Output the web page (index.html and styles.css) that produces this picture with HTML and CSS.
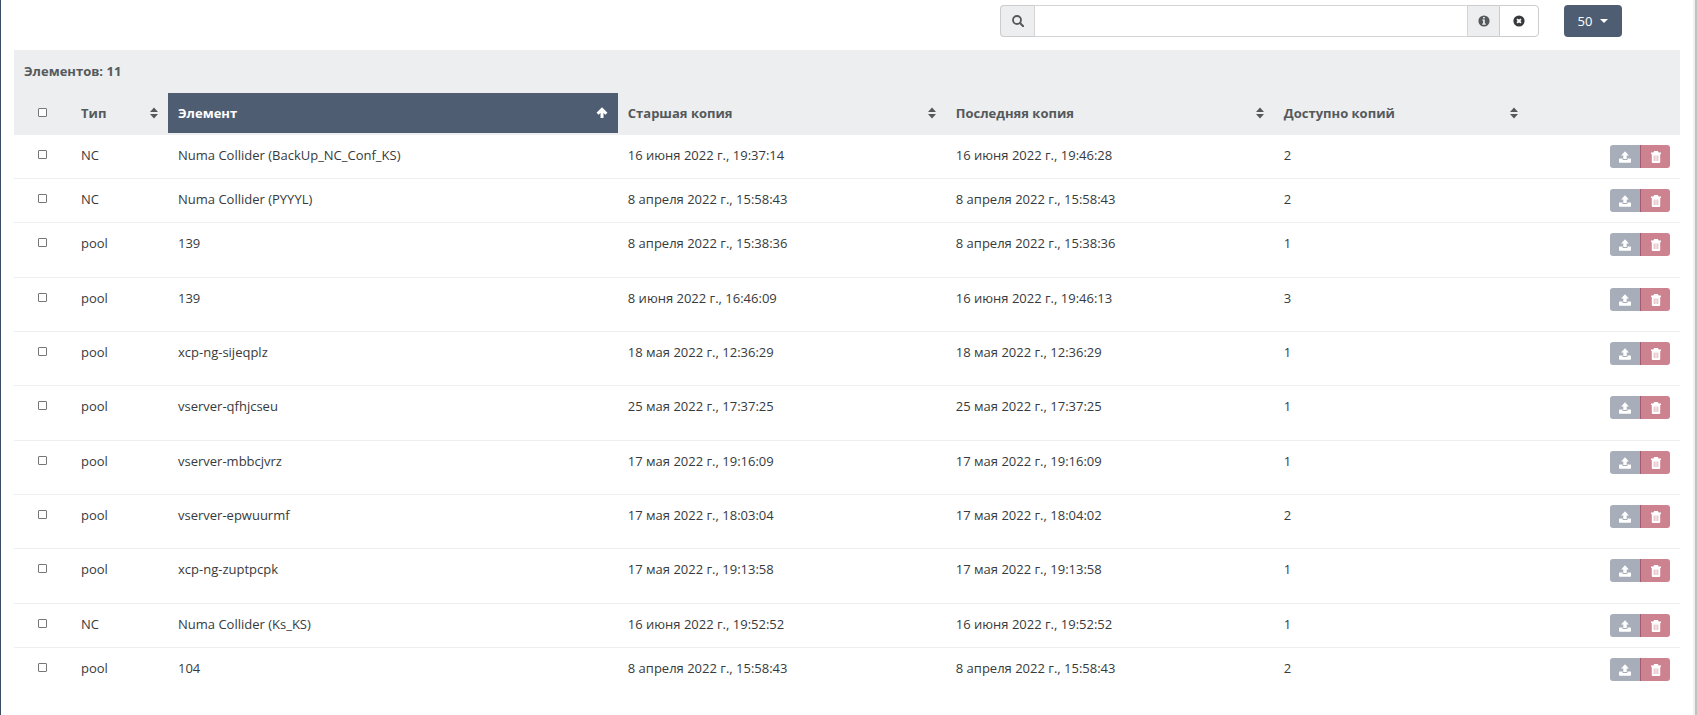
FILE: index.html
```html
<!DOCTYPE html>
<html lang="ru">
<head>
<meta charset="utf-8">
<title>Резервные копии</title>
<link rel="stylesheet" href="styles.css">
</head>
<body>
<svg class="sprite" aria-hidden="true">
  <symbol id="i-sort" viewBox="0 0 8 12"><path d="M4 0.5 8 5H0zM4 11.500 0 7h8z"/></symbol>
  <symbol id="i-up" viewBox="0 0 12 12"><path d="M1.600 6.700 6 2.300l4.400 4.400M6 3v8" fill="none" stroke="currentColor" stroke-width="3"/></symbol>
  <symbol id="i-upload" viewBox="0 0 12 12"><path d="M6 .3 9.900 4.500H7.700V8H4.300V4.500H2.100zM.6 7.600h3v1.300h4.800V7.600h3c.3 0 .6.300.6.600v2.900c0 .3-.3.600-.6.600H.6c-.3 0-.6-.3-.6-.6V8.200c0-.3.300-.6.600-.6z"/></symbol>
  <symbol id="i-trash" viewBox="0 0 12 12"><path d="M4.200 0h3.600l.9 1.500H11v1.500h-.8v7.900c0 .6-.5 1.100-1.100 1.100H2.900c-.6 0-1.100-.5-1.100-1.100V3H1V1.500h2.300z"/><path d="M4.200 4.500V10M6 4.500V10M7.800 4.500V10" stroke="#cc838f" stroke-width=".6"/></symbol>
</svg>
<main class="page">
  <div class="toolbar">
    <form class="search" onsubmit="return false">
      <label class="addon" for="q" aria-label="Поиск"><svg class="icon" viewBox="0 0 12 12"><circle cx="5" cy="5" r="4" fill="none" stroke="currentColor" stroke-width="1.800"/><path d="m8 8 3.200 3.200" stroke="currentColor" stroke-width="2" stroke-linecap="round"/></svg></label>
      <input class="search-input" id="q" type="text">
      <span class="addon addon-info"><svg class="icon" viewBox="0 0 12 12"><path fill-rule="evenodd" d="M6 .4a5.600 5.600 0 1 1 0 11.200A5.600 5.600 0 0 1 6 .4zM5.100 1.900v1.500h1.700V1.900zM4.200 4.400v1.200h.9v3h-.9v1.200h3.600V8.600h-1V4.400z"/></svg></span>
      <button class="clear" type="reset" aria-label="Очистить"><svg class="icon" viewBox="0 0 12 12"><circle cx="6" cy="6" r="5.600"/><path d="m4.100 4.100 3.800 3.800m0-3.800L4.100 7.900" stroke="#fff" stroke-width="1.900"/></svg></button>
    </form>
    <button class="limit" type="button">50<span class="caret"></span></button>
  </div>
  <table class="grid">
    <colgroup><col class="c-check"><col class="c-type"><col class="c-item"><col class="c-old"><col class="c-last"><col class="c-count"><col class="c-act"></colgroup>
    <thead>
      <tr class="summary"><th colspan="7">Элементов: 11</th></tr>
      <tr class="heads">
        <th class="check"><input type="checkbox" aria-label="Выбрать все"></th>
        <th><div class="head">Тип<svg class="sort"><use href="#i-sort"/></svg></div></th>
        <th class="sorted"><div class="head">Элемент<svg class="icon"><use href="#i-up"/></svg></div></th>
        <th><div class="head">Старшая копия<svg class="sort"><use href="#i-sort"/></svg></div></th>
        <th><div class="head">Последняя копия<svg class="sort"><use href="#i-sort"/></svg></div></th>
        <th><div class="head">Доступно копий<svg class="sort"><use href="#i-sort"/></svg></div></th>
        <th></th>
      </tr>
    </thead>
    <tbody id="rows"></tbody>
  </table>
</main>
<script src="rows.js"></script>
</body>
</html>
```

FILE: styles.css
```css
* { box-sizing: border-box; }
body {
  margin: 0;
  background: #fff;
  color: #373a3c;
  font: 13px/20px "Open Sans", "Noto Sans", sans-serif;
}
.sprite { display: none; }
.page {
  min-height: 100vh;
  padding: 5px 15px 0 13px;
  border-left: 1px solid #3d4a63;
  border-right: 2px solid #c1c1c1;
  box-shadow: inset -2px 0 #f1f1f1;
}
svg { display: block; fill: currentColor; }
.icon { width: 12px; height: 12px; }
.toolbar {
  display: flex;
  justify-content: flex-end;
  gap: 25px;
  height: 45px;
  padding-right: 58px;
}
.search { display: flex; width: 539px; height: 32px; }
.addon, .clear {
  display: flex;
  align-items: center;
  justify-content: center;
  border: 1px solid #ccc;
  color: #55595c;
}
.addon { width: 34px; background: #eceeef; border-right: 0; border-radius: 4px 0 0 4px; }
.addon-info { width: 31px; border-left: 0; border-radius: 0; }
.search-input { flex: 1; min-width: 0; padding: 0 8px; border: 1px solid #d4d4d4; font: inherit; }
.clear { width: 40px; padding: 0; background: #fff; color: #373a3c; border-radius: 0 4px 4px 0; }
.limit {
  display: flex;
  align-items: center;
  justify-content: center;
  gap: 8px;
  width: 58px;
  height: 32px;
  padding: 0;
  border: 0;
  border-radius: 4px;
  background: #4f5d73;
  color: #fff;
  font: inherit;
}
.caret { border: 4px solid transparent; border-top-color: #fff; border-bottom: 0; }
.grid { width: 100%; table-layout: fixed; border-collapse: collapse; }
.c-check { width: 57px; }
.c-type { width: 97px; }
.c-item { width: 27%; }
.c-old { width: 328px; }
.c-last { width: 328px; }
.c-count { width: 254px; }
th, td { padding: 10px; text-align: left; vertical-align: top; }
thead { background: #eceeef; color: #55595c; }
.summary th { height: 43px; padding: 11px 10px; }
.heads th { height: 40px; }
.heads { border-bottom: 2px solid #eceeef; }
.head { display: flex; align-items: center; justify-content: space-between; }
.sort { width: 8px; height: 12px; }
.sorted { background: #4f5d73; color: #fff; }
.check { padding-left: 24px; }
.check input { display: block; width: 9px; height: 9px; margin: 5px 0 0; appearance: none; border: 1px solid #767676; border-radius: 1px; background: #fff; }
.check input:checked { background: #4f5d73; }
tbody tr { height: 44px; }
tbody tr + tr { border-top: 1px solid #eceeef; }
tbody .pool { height: 54px; }
tbody .pool:nth-child(3n) { height: 55px; }
.actions { display: flex; justify-content: flex-end; }
.act { display: flex; align-items: center; justify-content: center; width: 30px; height: 23px; padding: 0; border: 0; color: #fff; }
.act-restore { background: #a7aeb9; border-radius: 3px 0 0 3px; }
.act-delete { background: #cc838f; border-left: 1px solid #a45b70; border-radius: 0 3px 3px 0; }
```

FILE: rows.js
```js
const rows = [
  ["NC", "Numa Collider (BackUp_NC_Conf_KS)", "16 июня 2022 г., 19:37:14", "16 июня 2022 г., 19:46:28", 2],
  ["NC", "Numa Collider (PYYYL)", "8 апреля 2022 г., 15:58:43", "8 апреля 2022 г., 15:58:43", 2],
  ["pool", "139", "8 апреля 2022 г., 15:38:36", "8 апреля 2022 г., 15:38:36", 1],
  ["pool", "139", "8 июня 2022 г., 16:46:09", "16 июня 2022 г., 19:46:13", 3],
  ["pool", "xcp-ng-sijeqplz", "18 мая 2022 г., 12:36:29", "18 мая 2022 г., 12:36:29", 1],
  ["pool", "vserver-qfhjcseu", "25 мая 2022 г., 17:37:25", "25 мая 2022 г., 17:37:25", 1],
  ["pool", "vserver-mbbcjvrz", "17 мая 2022 г., 19:16:09", "17 мая 2022 г., 19:16:09", 1],
  ["pool", "vserver-epwuurmf", "17 мая 2022 г., 18:03:04", "17 мая 2022 г., 18:04:02", 2],
  ["pool", "xcp-ng-zuptpcpk", "17 мая 2022 г., 19:13:58", "17 мая 2022 г., 19:13:58", 1],
  ["NC", "Numa Collider (Ks_KS)", "16 июня 2022 г., 19:52:52", "16 июня 2022 г., 19:52:52", 1],
  ["pool", "104", "8 апреля 2022 г., 15:58:43", "8 апреля 2022 г., 15:58:43", 2]
];
document.getElementById("rows").innerHTML = rows.map(r => `
  <tr class="${r[0].toLowerCase()}">
    <td class="check"><input type="checkbox" aria-label="Выбрать ${r[1]}"></td>
    ${r.map(v => `<td>${v}</td>`).join("")}
    <td><div class="actions">
      <button class="act act-restore" type="button" aria-label="Восстановить"><svg class="icon"><use href="#i-upload"/></svg></button>
      <button class="act act-delete" type="button" aria-label="Удалить"><svg class="icon"><use href="#i-trash"/></svg></button>
    </div></td>
  </tr>`).join("");
```
